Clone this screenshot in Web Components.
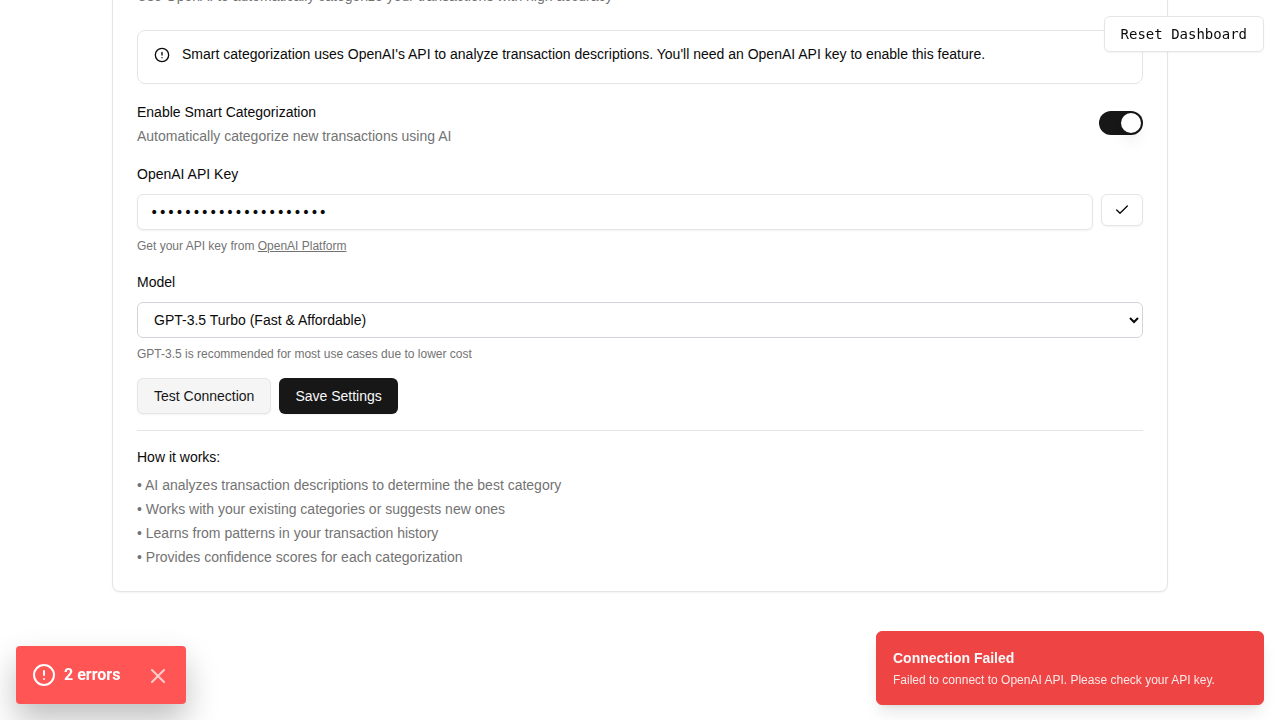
<!DOCTYPE html>
<html lang="en">
<head>
<meta charset="utf-8">
<meta name="viewport" content="width=device-width, initial-scale=1">
<title>Smart Categorization Settings</title>
<style>
  :root {
    --fg: #0a0a0a;
    --muted: #737373;
    --line: #e5e5e5;
    --primary: #171717;
    --mono: "DejaVu Sans Mono", monospace;
  }
  body {
    margin: 0;
    background: #fff;
    color: var(--fg);
    font: 14px/20px "Liberation Sans", Arial, sans-serif;
  }
</style>
</head>
<body>
<settings-page></settings-page>

<script>
const define = (name, html, setup) => {
  const template = document.createElement('template');
  template.innerHTML = html;
  customElements.define(name, class extends HTMLElement {
    constructor() {
      super();
      this.attachShadow({ mode: 'open' }).append(template.content.cloneNode(true));
      if (setup) setup(this, this.shadowRoot);
    }
  });
};

define('ui-button', `
  <style>
    :host { display: inline-block; }
    button {
      display: flex; align-items: center; justify-content: center;
      box-sizing: border-box; height: 36px; padding: 0 16px;
      border: 1px solid var(--line); border-radius: 6px;
      background: #fff; color: var(--fg);
      font: inherit; white-space: nowrap; cursor: pointer;
      box-shadow: 0 1px 2px rgba(0, 0, 0, .05);
    }
    :host([variant="secondary"]) button { background: #f5f5f5; color: var(--primary); }
    :host([variant="primary"]) button { background: var(--primary); border: 0; color: #fafafa; }
    :host([size="small"]) button { height: 32px; padding: 0 12px; }
  </style>
  <button type="button"><slot></slot></button>
`, (host, root) => {
  if (host.getAttribute('label')) root.querySelector('button').setAttribute('aria-label', host.getAttribute('label'));
});

define('ui-card', `
  <style>
    :host {
      display: flex; flex-direction: column; gap: 16px;
      padding: 24px; border: 1px solid var(--line); border-radius: 8px;
      background: #fff; box-shadow: 0 1px 2px rgba(0, 0, 0, .05);
    }
    header { color: var(--muted); margin-bottom: 8px; }
  </style>
  <header><slot name="description"></slot></header>
  <slot></slot>
`);

define('ui-alert', `
  <style>
    :host {
      display: flex; align-items: flex-start; gap: 12px;
      padding: 13px 16px 19px; border: 1px solid var(--line); border-radius: 8px;
    }
    svg { flex: none; margin-top: 3px; }
  </style>
  <svg width="16" height="16" viewBox="0 0 24 24" fill="none" stroke="currentColor" stroke-width="2" stroke-linecap="round" stroke-linejoin="round" aria-hidden="true">
    <circle cx="12" cy="12" r="10"/><path d="M12 8v4M12 16h.01"/>
  </svg>
  <span><slot></slot></span>
`);

define('setting-switch', `
  <style>
    :host { display: flex; align-items: center; justify-content: space-between; gap: 16px; }
    label { display: block; line-height: 24px; }
    p { margin: 2px 0 0; color: var(--muted); }
    input {
      appearance: none; flex: none; box-sizing: border-box;
      display: flex; width: 44px; height: 24px; margin: 0; padding: 2px;
      border-radius: 12px; background: var(--line); cursor: pointer;
    }
    input::before {
      content: ""; width: 20px; height: 20px; border-radius: 50%; background: #fff;
      box-shadow: 0 10px 15px -3px rgba(0, 0, 0, .1), 0 4px 6px -4px rgba(0, 0, 0, .1);
    }
    input:checked { background: var(--primary); justify-content: flex-end; }
  </style>
  <div>
    <label for="toggle"><slot name="label"></slot></label>
    <p id="hint"><slot name="hint"></slot></p>
  </div>
  <input id="toggle" type="checkbox" role="switch" aria-describedby="hint" checked>
`);

define('api-key-field', `
  <style>
    :host { display: flex; flex-direction: column; gap: 8px; }
    label { line-height: 24px; }
    .row { display: flex; align-items: flex-start; gap: 8px; }
    input {
      flex: 1; min-width: 0; box-sizing: border-box; height: 36px; padding: 4px 12px;
      border: 1px solid var(--line); border-radius: 6px; background: #fff; color: var(--fg);
      font: 14px/20px var(--mono); box-shadow: 0 1px 2px rgba(0, 0, 0, .05);
    }
    p { margin: 0; color: var(--muted); font-size: 12px; line-height: 16px; }
    a { color: inherit; }
    svg { display: block; }
  </style>
  <label for="key">OpenAI API Key</label>
  <div class="row">
    <input id="key" type="password" value="sk-000000000000000000" autocomplete="off">
    <ui-button size="small" label="Check key">
      <svg width="16" height="16" viewBox="0 0 24 24" fill="none" stroke="currentColor" stroke-width="2" stroke-linecap="round" stroke-linejoin="round" aria-hidden="true"><path d="M20 6 9 17l-5-5"/></svg>
    </ui-button>
  </div>
  <p>Get your API key from <a href="#platform">OpenAI Platform</a></p>
`);

define('model-field', `
  <style>
    :host { display: flex; flex-direction: column; gap: 8px; }
    label { line-height: 24px; }
    select {
      width: 100%; box-sizing: border-box; height: 36px; padding: 0 12px;
      border: 1px solid #d1d5db; border-radius: 6px;
      background: #fff; color: var(--fg); font: inherit;
    }
    p { margin: 0; color: var(--muted); font-size: 12px; line-height: 16px; }
  </style>
  <label for="model">Model</label>
  <select id="model">
    <option selected>GPT-3.5 Turbo (Fast &amp; Affordable)</option>
  </select>
  <p>GPT-3.5 is recommended for most use cases due to lower cost</p>
`);

define('how-it-works', `
  <style>
    :host { display: block; padding-top: 16px; border-top: 1px solid var(--line); }
    h4 { margin: 0 0 8px; font-size: 14px; font-weight: 400; }
    ul { display: flex; flex-direction: column; gap: 4px; margin: 0; padding: 0; list-style: none; color: var(--muted); }
  </style>
  <h4>How it works:</h4>
  <ul>
    <li>• AI analyzes transaction descriptions to determine the best category</li>
    <li>• Works with your existing categories or suggests new ones</li>
    <li>• Learns from patterns in your transaction history</li>
    <li>• Provides confidence scores for each categorization</li>
  </ul>
`);

define('error-badge', `
  <style>
    :host {
      display: flex; align-items: center; box-sizing: border-box; padding: 17px 16px;
      border-radius: 4px; background: #ff5555; color: #fff;
      font: 700 16px/24px Roboto, sans-serif;
      box-shadow: 0 16px 32px rgba(0, 0, 0, .25);
    }
    span { margin: 0 26px 0 8px; }
    svg { display: block; }
    button { padding: 0; border: 0; background: none; color: inherit; opacity: .7; cursor: pointer; }
  </style>
  <svg width="24" height="24" viewBox="0 0 24 24" fill="none" stroke="currentColor" stroke-width="2" stroke-linecap="round" stroke-linejoin="round" aria-hidden="true">
    <circle cx="12" cy="12" r="10"/><path d="M12 8v4M12 16h.01"/>
  </svg>
  <span><slot></slot></span>
  <button type="button" aria-label="Hide errors">
    <svg width="24" height="24" viewBox="0 0 24 24" fill="none" stroke="currentColor" stroke-width="2" stroke-linecap="round" aria-hidden="true"><path d="M18 7 6 19M6 7l12 12"/></svg>
  </button>
`);

define('toast-message', `
  <style>
    :host {
      display: flex; flex-direction: column; gap: 4px; box-sizing: border-box; padding: 16px;
      border: 1px solid #ef4444; border-radius: 6px; background: #ef4444; color: #fafafa;
      box-shadow: 0 10px 15px -3px rgba(0, 0, 0, .1), 0 4px 6px -4px rgba(0, 0, 0, .1);
    }
    strong { font-weight: 700; }
    span { font-size: 12px; line-height: 16px; opacity: .9; }
  </style>
  <strong><slot name="title"></slot></strong>
  <span><slot></slot></span>
`);

define('settings-page', `
  <style>
    :host { display: flow-root; }
    main { max-width: 1056px; margin: -39px auto 0; padding-bottom: 128px; }
    .actions { display: flex; gap: 8px; }
    .reset { position: fixed; top: 16px; right: 16px; font-family: var(--mono); }
    error-badge { position: fixed; left: 16px; bottom: 16px; }
    toast-message { position: fixed; right: 16px; bottom: 15px; width: 388px; max-width: calc(100% - 32px); }
  </style>
  <main>
    <ui-card>
      <span slot="description">Use OpenAI to automatically categorize your transactions with high accuracy</span>
      <ui-alert>Smart categorization uses OpenAI's API to analyze transaction descriptions. You'll need an OpenAI API key to enable this feature.</ui-alert>
      <setting-switch>
        <span slot="label">Enable Smart Categorization</span>
        <span slot="hint">Automatically categorize new transactions using AI</span>
      </setting-switch>
      <api-key-field></api-key-field>
      <model-field></model-field>
      <div class="actions">
        <ui-button variant="secondary">Test Connection</ui-button>
        <ui-button variant="primary">Save Settings</ui-button>
      </div>
      <how-it-works></how-it-works>
    </ui-card>
  </main>
  <ui-button class="reset">Reset Dashboard</ui-button>
  <error-badge>2 errors</error-badge>
  <toast-message role="status"><span slot="title">Connection Failed</span>Failed to connect to OpenAI API. Please check your API key.</toast-message>
`);
</script>
</body>
</html>
